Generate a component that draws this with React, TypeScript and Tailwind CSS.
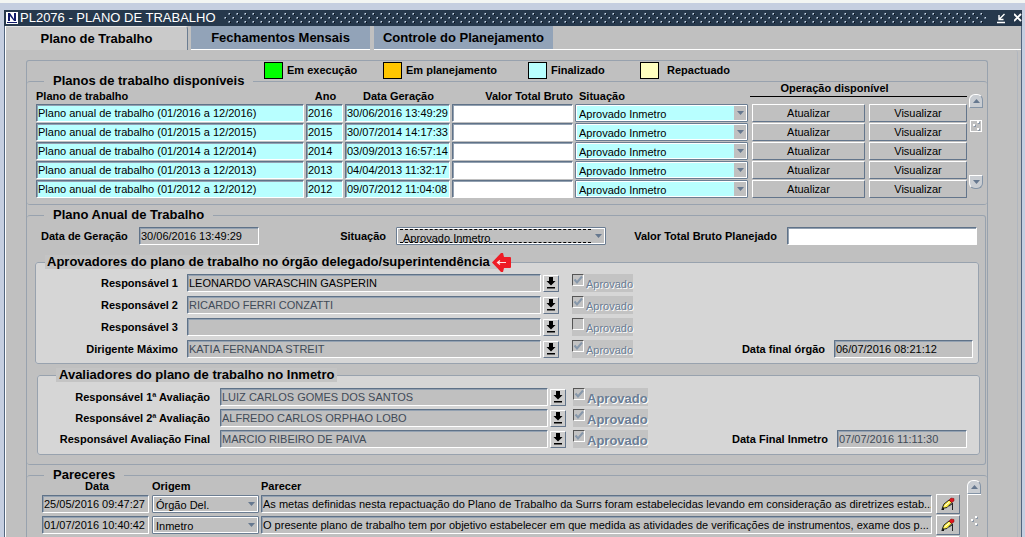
import { useState, type ReactNode } from "react";
import clsx from "clsx";

const fieldBase =
  "block w-full min-w-0 h-[18px] border border-t-[#5f7288] border-l-[#5f7288] border-r-white border-b-white pl-px text-[11px] leading-4 outline-none rounded-[1px] shadow-[inset_1px_1px_0_#93a1b1]";

function Field({
  id,
  label,
  value,
  className,
}: {
  id?: string;
  label?: string;
  value: string;
  className?: string;
}) {
  return <input id={id} aria-label={label} readOnly value={value} className={clsx(fieldBase, className)} />;
}

function Combo({
  id,
  label,
  value,
  className,
  arrowClass = "bg-[#c0c0c0]",
  focused = false,
}: {
  id?: string;
  label?: string;
  value: string;
  className?: string;
  arrowClass?: string;
  focused?: boolean;
}) {
  return (
    <div
      className={clsx(
        "relative flex h-[18px] items-stretch rounded-[1px] border border-[#6b7d92] shadow-[inset_1px_1px_0_#fff,inset_-1px_-1px_0_#fff]",
        className,
      )}
    >
      <select
        id={id}
        aria-label={label}
        className={clsx(
          "min-w-0 flex-1 appearance-none bg-transparent pl-[3px] pt-px text-[11px] leading-[14px] outline-none",
          focused && "my-px ml-[3px] border-y border-dashed border-black pl-0",
        )}
      >
        <option>{value}</option>
      </select>
      <span className={clsx("pointer-events-none m-px flex w-3 items-center justify-center", arrowClass)}>
        <svg width="7" height="4" viewBox="0 0 7 4">
          <path d="M0 0h7L3.5 4z" fill="#66788f" />
        </svg>
      </span>
    </div>
  );
}

function RaisedButton({ children, className, label }: { children: ReactNode; className?: string; label?: string }) {
  return (
    <button
      type="button"
      aria-label={label}
      className={clsx(
        "flex items-center justify-center rounded-[1px] border border-t-white border-l-white border-r-[#63758b] border-b-[#63758b] bg-[#c0c0c0] text-[11px] leading-4",
        className,
      )}
    >
      {children}
    </button>
  );
}

function ScrollButton({ up = false }: { up?: boolean }) {
  return (
    <button
      type="button"
      aria-label={up ? "Rolar para cima" : "Rolar para baixo"}
      className={clsx(
        "flex h-3.5 w-3.5 shrink-0 items-center justify-center border border-white border-r-[#8494a6] border-b-[#8494a6] bg-[#c9cdd2]",
        up ? "rounded-t-md" : "rounded-b-md",
      )}
    >
      <svg width="7" height="4" viewBox="0 0 7 4">
        <path d={up ? "M0 4h7L3.5 0z" : "M0 0h7L3.5 4z"} fill="#66788f" />
      </svg>
    </button>
  );
}

function Grip() {
  return (
    <svg width="9" height="11" viewBox="0 0 9 11">
      <g fill="#fff">
        <path d="M5 1h2v2H5zM1 4h2v2H1zM5 8h2v2H5z" />
      </g>
      <g fill="#8b98a8">
        <path d="M7 2h1v2H6V3h1zM3 5h1v2H2V6h1zM7 9h1v2H6v-1h1z" />
      </g>
    </svg>
  );
}

function ListButton({ name }: { name: string }) {
  return (
    <RaisedButton label={`Lista: ${name}`} className="h-[17px] w-4 shrink-0 bg-[#cccccc]">
      <svg width="10" height="12" viewBox="0 0 10 12">
        <path d="M3 0h4v4h2.500L5 8.500 .5 4H3zM1 10h8v1.500H1z" fill="#000" />
      </svg>
    </RaisedButton>
  );
}

function Approval({ name, checked, bold = false }: { name: string; checked: boolean; bold?: boolean }) {
  return (
    <label
      className={clsx(
        "ml-[13px] flex h-[18px] items-center gap-0.5 bg-[#c3c3c3] text-[#6a7d94] [text-shadow:1px_1px_0_#fff]",
        bold ? "text-[13px] font-bold" : "text-[11px]",
      )}
    >
      <span className="relative h-3 w-3 shrink-0 self-start">
        <input
          type="checkbox"
          aria-label={`Aprovado: ${name}`}
          defaultChecked={checked}
          disabled
          className="block h-3 w-3 appearance-none border border-t-[#555] border-l-[#555] border-r-white border-b-white"
        />
        {checked && (
          <svg className="absolute inset-0" width="12" height="12" viewBox="0 0 12 12">
            <path d="M2.500 5.500L5 8.500 10 2.500" fill="none" stroke="#8798ab" strokeWidth="2" />
          </svg>
        )}
      </span>
      <span className="pt-[3px] leading-[15px]">Aprovado</span>
    </label>
  );
}

function PencilIcon() {
  return (
    <svg width="14" height="14" viewBox="0 0 14 14">
      <path d="M1 11.500L3 7l5-4 3 2.500-5 5z" fill="#ffef3a" stroke="#222" strokeWidth="1" />
      <path d="M3.500 9l5-4" stroke="#fff" strokeWidth="1" />
      <path d="M8 3l2-2 3 .5v2.500l-2.500 1.500z" fill="#e0151c" stroke="#7a1010" strokeWidth=".5" />
      <path d="M0 13l3-3v3z" fill="#111" />
      <path d="M11.500 6v7M8 9l3-2" stroke="#222" strokeWidth="1" />
    </svg>
  );
}

const tabs = ["Plano de Trabalho", "Fechamentos Mensais", "Controle do Planejamento"];
const legendItems = [
  { text: "Em execução", swatch: "bg-[#00ff00]", width: "w-[119px]" },
  { text: "Em planejamento", swatch: "bg-[#ffc600]", width: "w-[145px]" },
  { text: "Finalizado", swatch: "bg-[#b8ffff]", width: "w-28" },
  { text: "Repactuado", swatch: "bg-[#ffffc0]", width: "w-28" },
];
const plans = [
  { year: "2016", date: "30/06/2016 13:49:29" },
  { year: "2015", date: "30/07/2014 14:17:33" },
  { year: "2014", date: "03/09/2013 16:57:14" },
  { year: "2013", date: "04/04/2013 11:32:17" },
  { year: "2012", date: "09/07/2012 11:04:08" },
];
const approvers = [
  { id: "r1", label: "Responsável 1", name: "LEONARDO VARASCHIN GASPERIN", ok: true },
  { id: "r2", label: "Responsável 2", name: "RICARDO FERRI CONZATTI", ok: true },
  { id: "r3", label: "Responsável 3", name: "", ok: false },
  { id: "dm", label: "Dirigente Máximo", name: "KATIA FERNANDA STREIT", ok: true },
];
const evaluators = [
  { id: "a1", label: "Responsável 1ª Avaliação", name: "LUIZ CARLOS GOMES DOS SANTOS" },
  { id: "a2", label: "Responsável 2ª Avaliação", name: "ALFREDO CARLOS ORPHAO LOBO" },
  { id: "af", label: "Responsável Avaliação Final", name: "MARCIO RIBEIRO DE PAIVA" },
];
const opinions = [
  {
    date: "25/05/2016 09:47:27",
    origin: "Órgão Del.",
    text: "As metas definidas nesta repactuação do Plano de Trabalho da Surrs foram estabelecidas levando em consideração as diretrizes estab...",
  },
  {
    date: "01/07/2016 10:40:42",
    origin: "Inmetro",
    text: "O presente plano de trabalho tem por objetivo estabelecer em que medida as atividades de verificações de instrumentos, exame dos p...",
  },
  { date: "", origin: "", text: "" },
];

const frame = "min-w-0 border border-[#98a2ae] rounded-[3px]";
const legendText = "text-[13px] font-bold leading-[14px]";

function TitleBar() {
  return (
    <header className="flex h-4 items-center gap-1 bg-[#26384c] text-white">
      <svg className="ml-0.5 shrink-0" width="12" height="12" viewBox="0 0 12 12">
        <path d="M0 0h12v12H0z" fill="#fff" />
        <path d="M2 1h2l4 6V1h2v8H8L4 4v5H2zM1 10h10v1H1z" fill="#101a6b" />
      </svg>
      <h1 className="-ml-0.5 whitespace-nowrap text-[13px] leading-4">PL2076 - PLANO DE TRABALHO</h1>
      <svg className="ml-1 h-3 min-w-0 flex-1" aria-hidden="true">
        <defs>
          <pattern id="grip" width="8" height="8" patternUnits="userSpaceOnUse">
            <path d="M5 1h1v1H5zM1 5h1v1H1z" fill="#d3dde8" />
            <path d="M6 2h1v1H6zM2 6h1v1H2z" fill="#060c14" />
            <path d="M4 1h1v2H4zM5 2h1v1H5zM0 5h1v2H0zM1 6h1v1H1z" fill="#6d8096" />
          </pattern>
        </defs>
        <rect width="100%" height="12" fill="url(#grip)" />
      </svg>
      <button type="button" aria-label="Minimizar" className="ml-1.5">
        <svg width="10" height="11" viewBox="0 0 10 11">
          <path d="M1 9.500h8M8.500 1L3.500 6M3 2v4.500h4.500" fill="none" stroke="#fff" strokeWidth="1.400" />
        </svg>
      </button>
      <button type="button" aria-label="Fechar" className="ml-1">
        <svg width="8" height="10" viewBox="0 0 8 10">
          <path d="M0 1l7 7M7 1L0 8" stroke="#fff" strokeWidth="1.800" />
        </svg>
      </button>
    </header>
  );
}

export default function App() {
  const [active, setActive] = useState(0);
  return (
    <div className="flex h-screen flex-col overflow-hidden bg-[#c5cee0] pr-[3px] font-['Liberation_Sans',Arial,sans-serif] text-black">
      <div className="-mr-[3px] h-[3px] shrink-0 bg-[#f3f5f3]" />
      <div className="ml-1 mt-[7px] flex min-h-0 flex-1 flex-col bg-[#c0c0c0]">
        <TitleBar />
        <div className="flex min-h-0 flex-1 flex-col overflow-hidden border-x border-[#53667f]">
          <nav role="tablist" className="flex h-6 shrink-0 items-stretch border-l border-white">
            {tabs.map((tab, i) => (
              <button
                key={tab}
                type="button"
                role="tab"
                aria-selected={active === i}
                onClick={() => setActive(i)}
                className={clsx(
                  "flex items-center justify-center text-[13px] font-bold leading-4",
                  i === 0 ? "w-[182px]" : "mr-1 w-[179px]",
                  active === i
                    ? "mr-[3px] rounded-tr-[3px] border-r border-t border-t-[#e6e6e6] border-r-[#6b7d92] bg-[#cacaca]"
                    : "border-b border-white bg-[#92a3b8]",
                )}
              >
                {tab}
              </button>
            ))}
            <span className="-ml-1 flex-1 border-b border-white" />
          </nav>

          <main className="mr-[3px] shrink-0 rounded-tr-[3px] border-l border-r border-l-white border-r-[#b0b6bf] pl-5 pr-[29px] pt-2.5">
            <div className="rounded-t-[3px] border border-b-0 border-[#98a2ae]">
              <ul className="flex h-[13px] justify-start pl-[237px] pt-0.5 text-[11px] font-bold">
                {legendItems.map((item) => (
                  <li key={item.text} className={clsx("flex h-3.5 items-center gap-1", item.width)}>
                    <span className={clsx("h-[17px] w-[19px] shrink-0 border border-black", item.swatch)} />
                    <span className={clsx("whitespace-nowrap", item.text === "Repactuado" && "ml-1")}>{item.text}</span>
                  </li>
                ))}
              </ul>

              <fieldset className="min-w-0 rounded-[3px] border-y border-[#98a2ae] pb-[5px] pl-[9px] pr-1">
                <legend className={clsx(legendText, "ml-2 px-[9px]")}>Planos de trabalho disponíveis</legend>
                <div className="flex items-stretch">
                  <table className="-mt-2 min-w-0 flex-1 table-fixed border-separate border-spacing-0">
                    <colgroup>
                      <col />
                      <col className="w-[39px]" />
                      <col className="w-[107px]" />
                      <col className="w-[123px]" />
                      <col className="w-[177px]" />
                      <col className="w-[117px]" />
                      <col className="w-[98px]" />
                    </colgroup>
                    <thead>
                      <tr className="h-6 text-[11px] font-bold leading-3">
                        <th className="pb-0.5 text-left align-bottom">Plano de trabalho</th>
                        <th className="pb-0.5 align-bottom">Ano</th>
                        <th className="pb-0.5 align-bottom">Data Geração</th>
                        <th className="whitespace-nowrap pb-0.5 pr-0.5 text-right align-bottom">Valor Total Bruto</th>
                        <th className="pb-0.5 pl-1 text-left align-bottom">Situação</th>
                        <th colSpan={2} className="align-top">
                          <span className="-ml-0.5 block border-b border-black pb-0.5 pr-12 pt-0.5">
                            Operação disponível
                          </span>
                        </th>
                      </tr>
                    </thead>
                    <tbody>
                      {plans.map((p) => (
                        <tr key={p.year}>
                          <td className="pb-px pr-0.5">
                            <Field
                              label={`Plano de trabalho ${p.year}`}
                              value={`Plano anual de trabalho (01/${p.year} a 12/${p.year})`}
                              className="bg-[#b8ffff]"
                            />
                          </td>
                          <td className="pb-px pr-0.5">
                            <Field label={`Ano ${p.year}`} value={p.year} className="bg-[#b8ffff]" />
                          </td>
                          <td className="pb-px pr-0.5">
                            <Field label={`Data Geração ${p.year}`} value={p.date} className="bg-[#b8ffff]" />
                          </td>
                          <td className="pb-px pr-0.5">
                            <Field label={`Valor Total Bruto ${p.year}`} value="" className="bg-white" />
                          </td>
                          <td className="pb-px pr-1">
                            <Combo label={`Situação ${p.year}`} value="Aprovado Inmetro" className="bg-[#b8ffff]" />
                          </td>
                          <td className="pb-px pr-1">
                            <RaisedButton className="h-[18px] w-full">Atualizar</RaisedButton>
                          </td>
                          <td className="pb-px">
                            <RaisedButton className="h-[18px] w-full">Visualizar</RaisedButton>
                          </td>
                        </tr>
                      ))}
                    </tbody>
                  </table>
                  <div className="mb-2.5 ml-0.5 mt-1.5 flex w-3.5 flex-col items-center justify-between">
                    <ScrollButton up />
                    <div className="mb-8 flex h-3 w-3 items-center justify-center border border-white">
                      <Grip />
                    </div>
                    <ScrollButton />
                  </div>
                </div>
              </fieldset>

              <fieldset className={clsx(frame, "mr-px mt-[3px] border-l-0 pb-[9px] pl-[9px] pr-[5px]")}>
                <legend className={clsx(legendText, "ml-2 px-[9px]")}>Plano Anual de Trabalho</legend>
                <div className="mb-2.5 mt-[5px] flex items-center pl-[5px] pr-[3px] text-[11px] font-bold">
                  <label htmlFor="gen" className="w-[98px] whitespace-nowrap">
                    Data de Geração
                  </label>
                  <div className="w-[120px] font-normal">
                    <Field id="gen" value="30/06/2016 13:49:29" className="bg-[#c0c0c0]" />
                  </div>
                  <label htmlFor="sit" className="w-[137px] pr-2.5 text-right">
                    Situação
                  </label>
                  <Combo
                    id="sit"
                    value="Aprovado Inmetro"
                    focused
                    className="w-[210px] bg-[#c0c0c0] font-normal"
                  />
                  <label htmlFor="val" className="w-[181px] pr-2.5 text-right">
                    Valor Total Bruto Planejado
                  </label>
                  <div className="flex-1">
                    <Field id="val" value="" className="bg-white" />
                  </div>
                </div>

                <fieldset className={clsx(frame, "-ml-px mr-px bg-[#d6d6d6] pb-[5px] pr-[5px]")}>
                  <legend className={clsx(legendText, "ml-[9px] flex items-center gap-0.5 bg-[#c4c4c4] px-0.5")}>
                    Aprovadores do plano de trabalho no órgão delegado/superintendência
                    <svg className="-my-1 -mr-4" width="19" height="19" viewBox="0 0 19 19">
                      <path d="M0 9.500L9 0h2l1 4h6q1 0 1 1v9q0 1-1 1h-6l-1 4H9z" fill="#ee1c25" />
                      <path d="M5 9.500h9M8 7.500L5.500 9.500 8 11.500" fill="none" stroke="#ffe4e4" strokeWidth="1.200" />
                    </svg>
                  </legend>
                  <div className="mt-[5px] flex flex-col gap-1">
                    {approvers.map((a, i) => (
                      <div key={a.id} className="flex items-center">
                        <label htmlFor={a.id} className="w-[151px] shrink-0 pr-[9px] text-right text-[11px] font-bold">
                          {a.label}
                        </label>
                        <div className="mr-0.5 w-[354px]">
                          <Field
                            id={a.id}
                            value={a.name}
                            className={clsx("bg-[#c0c0c0]", i > 0 && "text-[#3f4a57]")}
                          />
                        </div>
                        <ListButton name={a.label} />
                        <Approval name={a.label} checked={a.ok} />
                        {i === 3 && (
                          <div className="ml-auto flex items-center">
                            <label htmlFor="dfo" className="pr-[9px] text-[11px] font-bold">
                              Data final órgão
                            </label>
                            <div className="w-[139px]">
                              <Field id="dfo" value="06/07/2016 08:21:12" className="bg-[#c0c0c0]" />
                            </div>
                          </div>
                        )}
                      </div>
                    ))}
                  </div>
                </fieldset>

                <fieldset className={clsx(frame, "ml-px mt-1 bg-[#d6d6d6] pb-1.5 pr-3")}>
                  <legend className={clsx(legendText, "ml-[18px] bg-[#c4c4c4] px-[3px]")}>
                    Avaliadores do plano de trabalho no Inmetro
                  </legend>
                  <div className="mt-1.5 flex flex-col gap-[3px]">
                    {evaluators.map((a, i) => (
                      <div key={a.id} className="flex items-center">
                        <label
                          htmlFor={a.id}
                          className="w-[182px] shrink-0 whitespace-nowrap pr-2.5 text-right text-[11px] font-bold"
                        >
                          {a.label}
                        </label>
                        <div className="mr-0.5 w-[328px]">
                          <Field id={a.id} value={a.name} className="bg-[#c0c0c0] text-[#3f4a57]" />
                        </div>
                        <ListButton name={a.label} />
                        <div className="-ml-1.5">
                          <Approval name={a.label} checked bold />
                        </div>
                        {i === 2 && (
                          <div className="ml-auto flex items-center">
                            <label htmlFor="dfi" className="pr-[9px] text-[11px] font-bold">
                              Data Final Inmetro
                            </label>
                            <div className="w-[130px]">
                              <Field id="dfi" value="07/07/2016 11:11:30" className="bg-[#c0c0c0] text-[#3f4a57]" />
                            </div>
                          </div>
                        )}
                      </div>
                    ))}
                  </div>
                </fieldset>
              </fieldset>

              <fieldset className="mt-[3px] min-w-0 rounded-t-[3px] border-t border-[#98a2ae] pl-[15px] pr-1.5">
                <legend className={clsx(legendText, "ml-0.5 px-[9px]")}>Pareceres</legend>
                <div className="-mt-0.5 flex">
                  <table className="min-w-0 flex-1 table-fixed border-separate border-spacing-0">
                    <colgroup>
                      <col className="w-[110px]" />
                      <col className="w-[109px]" />
                      <col />
                      <col className="w-6" />
                    </colgroup>
                    <thead>
                      <tr className="text-[11px] font-bold leading-3">
                        <th className="pb-0.5">Data</th>
                        <th className="pb-0.5 text-left">Origem</th>
                        <th className="pb-0.5 text-left">Parecer</th>
                        <th aria-label="Editar" />
                      </tr>
                    </thead>
                    <tbody>
                      {opinions.map((o, i) => (
                        <tr key={i}>
                          <td className="pb-px pr-[3px]">
                            <Field label={`Data ${i + 1}`} value={o.date} className="h-5 bg-[#c0c0c0]" />
                          </td>
                          <td className="pb-px pr-0.5">
                            <Combo label={`Origem ${i + 1}`} value={o.origin} className="h-5 bg-[#c0c0c0]" />
                          </td>
                          <td className="pb-px pr-1">
                            <Field label={`Parecer ${i + 1}`} value={o.text} className="h-5 bg-[#c0c0c0]" />
                          </td>
                          <td className="pb-px">
                            <RaisedButton label={`Editar parecer ${i + 1}`} className="h-5 w-full">
                              <PencilIcon />
                            </RaisedButton>
                          </td>
                        </tr>
                      ))}
                    </tbody>
                  </table>
                  <div className="ml-[7px] flex w-3.5 flex-col">
                    <ScrollButton up />
                    <div className="flex flex-1 justify-center border-l border-t border-white pt-5">
                      <Grip />
                    </div>
                  </div>
                </div>
              </fieldset>
            </div>
          </main>
        </div>
      </div>
    </div>
  );
}
